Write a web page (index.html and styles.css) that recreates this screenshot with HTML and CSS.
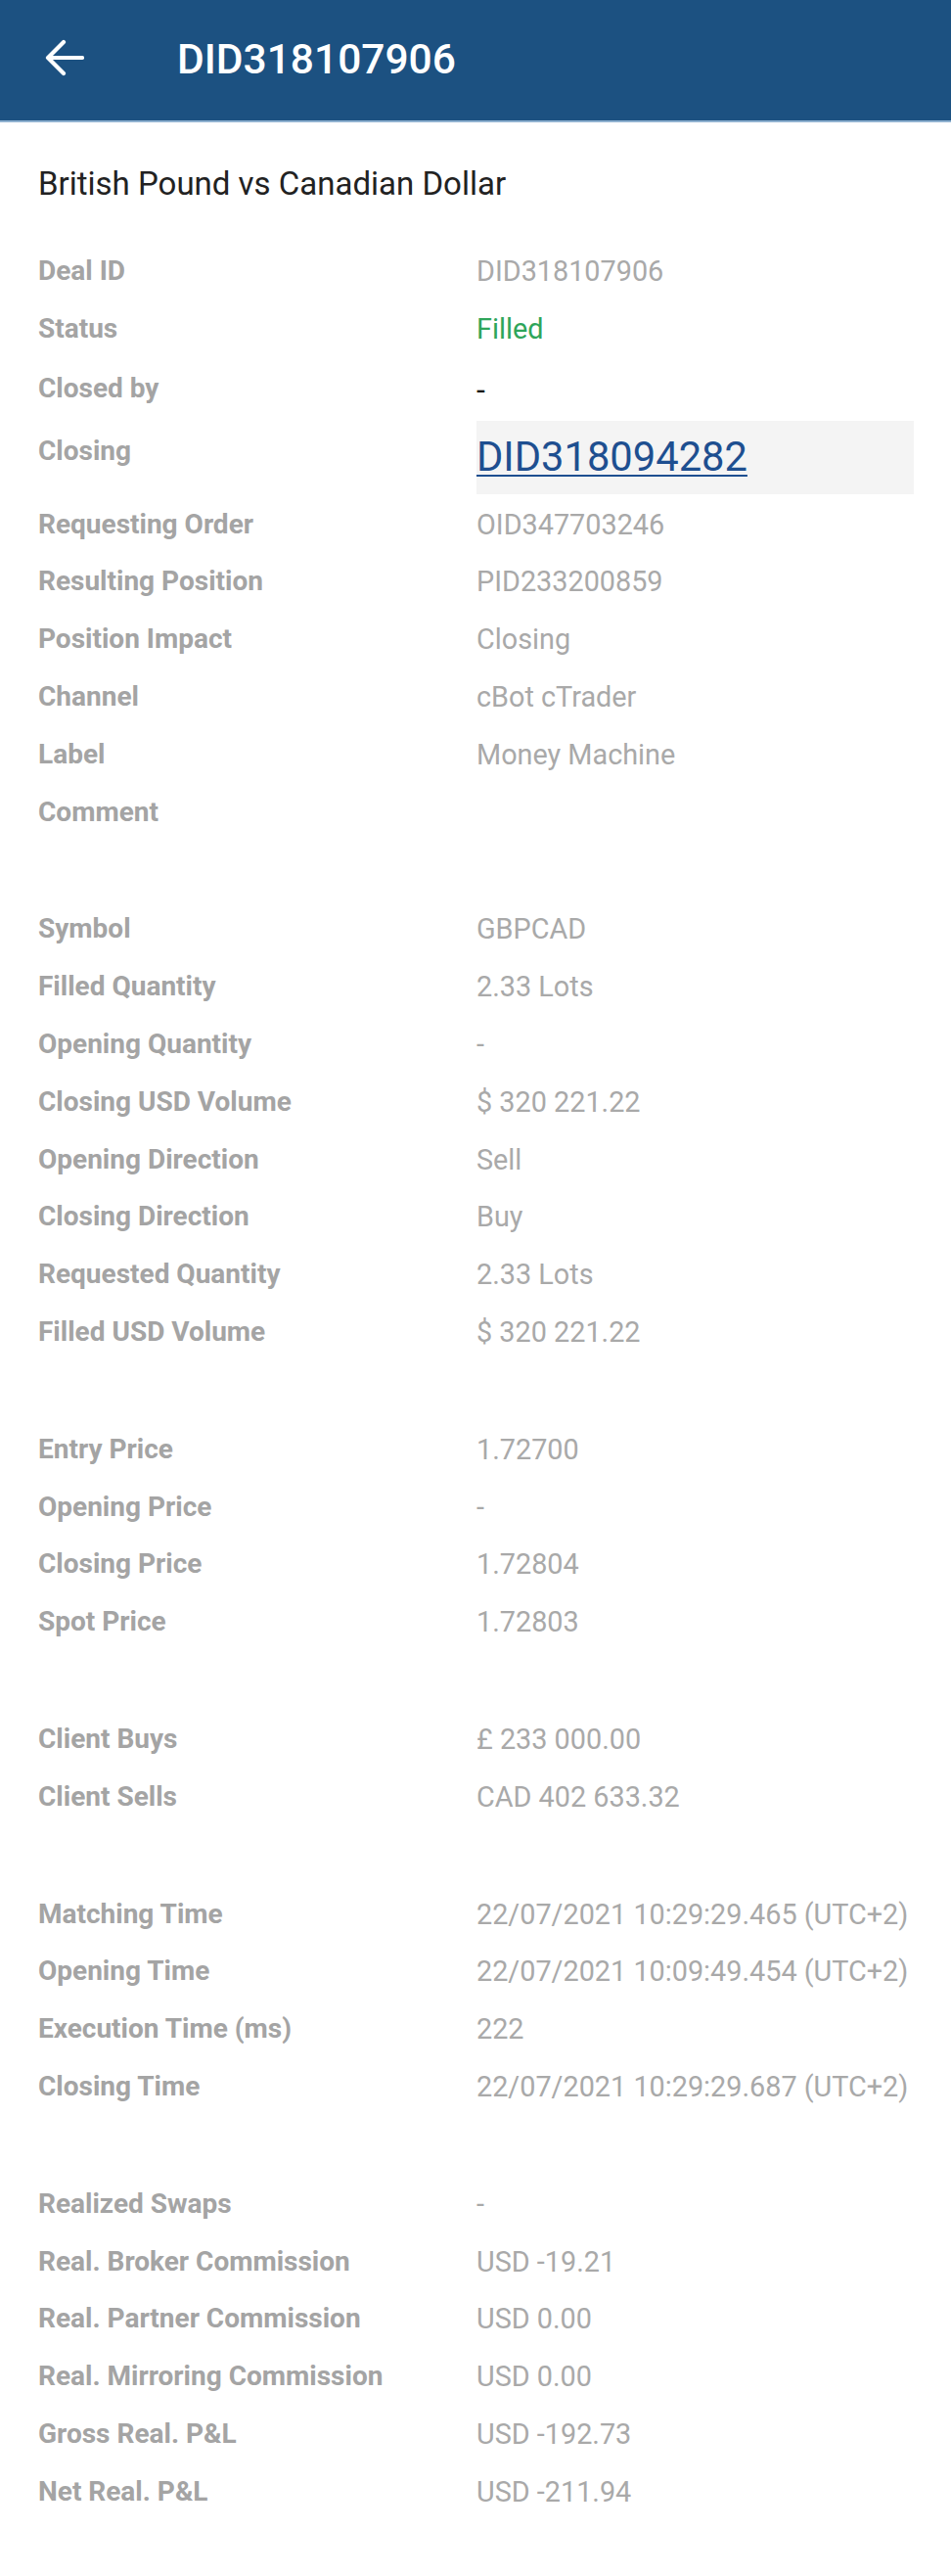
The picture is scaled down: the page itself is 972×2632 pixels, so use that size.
FILE: index.html
```html
<!DOCTYPE html>
<html lang="en">
<head>
    <meta charset="UTF-8">
    <meta name="viewport" content="width=device-width, initial-scale=1.0">
    <title>DID318107906</title>
    <link rel="stylesheet" href="styles.css">
</head>
<body>
    <div class="topbar">
        <svg class="back" width="40" height="40" viewBox="0 0 40 40">
            <path d="M38 20 H4 M19 4 L3 20 L19 36" fill="none" stroke="#fff" stroke-width="4.2" stroke-linecap="round" stroke-linejoin="round"/>
        </svg>
        <span class="title">DID318107906</span>
    </div>

    <div class="content">
        <p class="subtitle">British Pound vs Canadian Dollar</p>

        <div class="section">
            <div class="row"><span class="label">Deal ID</span><span class="value">DID318107906</span></div>
            <div class="row"><span class="label">Status</span><span class="value filled">Filled</span></div>
            <div class="row closed-by"><span class="label">Closed by</span><span class="value dash">-</span></div>
            <div class="row row-link"><span class="label">Closing</span><span class="value link-box"><a href="#">DID318094282</a></span></div>
            <div class="row"><span class="label">Requesting Order</span><span class="value">OID347703246</span></div>
            <div class="row"><span class="label">Resulting Position</span><span class="value">PID233200859</span></div>
            <div class="row"><span class="label">Position Impact</span><span class="value">Closing</span></div>
            <div class="row"><span class="label">Channel</span><span class="value">cBot cTrader</span></div>
            <div class="row"><span class="label">Label</span><span class="value">Money Machine</span></div>
            <div class="row"><span class="label">Comment</span><span class="value"></span></div>
        </div>

        <div class="section">
            <div class="row"><span class="label">Symbol</span><span class="value">GBPCAD</span></div>
            <div class="row"><span class="label">Filled Quantity</span><span class="value">2.33 Lots</span></div>
            <div class="row"><span class="label">Opening Quantity</span><span class="value">-</span></div>
            <div class="row"><span class="label">Closing USD Volume</span><span class="value">$ 320 221.22</span></div>
            <div class="row"><span class="label">Opening Direction</span><span class="value">Sell</span></div>
            <div class="row"><span class="label">Closing Direction</span><span class="value">Buy</span></div>
            <div class="row"><span class="label">Requested Quantity</span><span class="value">2.33 Lots</span></div>
            <div class="row"><span class="label">Filled USD Volume</span><span class="value">$ 320 221.22</span></div>
        </div>

        <div class="section">
            <div class="row"><span class="label">Entry Price</span><span class="value">1.72700</span></div>
            <div class="row"><span class="label">Opening Price</span><span class="value">-</span></div>
            <div class="row"><span class="label">Closing Price</span><span class="value">1.72804</span></div>
            <div class="row"><span class="label">Spot Price</span><span class="value">1.72803</span></div>
        </div>

        <div class="section">
            <div class="row"><span class="label">Client Buys</span><span class="value">£ 233 000.00</span></div>
            <div class="row"><span class="label">Client Sells</span><span class="value">CAD 402 633.32</span></div>
        </div>

        <div class="section">
            <div class="row"><span class="label">Matching Time</span><span class="value">22/07/2021 10:29:29.465 (UTC+2)</span></div>
            <div class="row"><span class="label">Opening Time</span><span class="value">22/07/2021 10:09:49.454 (UTC+2)</span></div>
            <div class="row"><span class="label">Execution Time (ms)</span><span class="value">222</span></div>
            <div class="row"><span class="label">Closing Time</span><span class="value">22/07/2021 10:29:29.687 (UTC+2)</span></div>
        </div>

        <div class="section">
            <div class="row"><span class="label">Realized Swaps</span><span class="value">-</span></div>
            <div class="row"><span class="label">Real. Broker Commission</span><span class="value">USD -19.21</span></div>
            <div class="row"><span class="label">Real. Partner Commission</span><span class="value">USD 0.00</span></div>
            <div class="row"><span class="label">Real. Mirroring Commission</span><span class="value">USD 0.00</span></div>
            <div class="row"><span class="label">Gross Real. P&amp;L</span><span class="value">USD -192.73</span></div>
            <div class="row"><span class="label">Net Real. P&amp;L</span><span class="value">USD -211.94</span></div>
        </div>
    </div>
</body>
</html>
```

FILE: styles.css
```css
body { margin: 0; font-family: Roboto, "Noto Sans", Arial, sans-serif; background: #fff; }
.topbar { height: 125px; background: #1c5181; border-bottom: 2px solid #8fb1d0; display: flex; align-items: center; box-sizing: border-box; }
.back { margin-left: 46px; margin-top: -6px; }
.title { margin-left: 95px; color: #fff; font-size: 42.5px; font-weight: 500; margin-top: -2px; }
.content { padding: 0 38px 0 39px; }
.subtitle { margin: 43px 0 40px; font-size: 33px; line-height: 40px; color: #222; }
.section + .section { margin-top: 61px; }
.row { display: flex; align-items: center; padding: 12px 0; }
.label { width: 448px; flex-shrink: 0; font-size: 28px; line-height: 34.8px; font-weight: 700; color: #a4a4a4; }
.value { font-size: 28.8px; line-height: 34.8px; color: #a9a9a9; }
.filled { color: #2ea55a; }
.dash { color: #111; font-size: 32px; line-height: 40px; }
.row-link { align-items: flex-start; padding: 0 0 2px; }
.row-link .label { padding-top: 14px; }
.link-box { flex: 1; height: 75px; background: #f4f4f4; display: flex; align-items: center; }
.link-box a { color: #1e4f90; font-size: 41.7px; line-height: 50px; text-decoration: underline; text-decoration-thickness: 2px; text-underline-offset: 4px; }
```
